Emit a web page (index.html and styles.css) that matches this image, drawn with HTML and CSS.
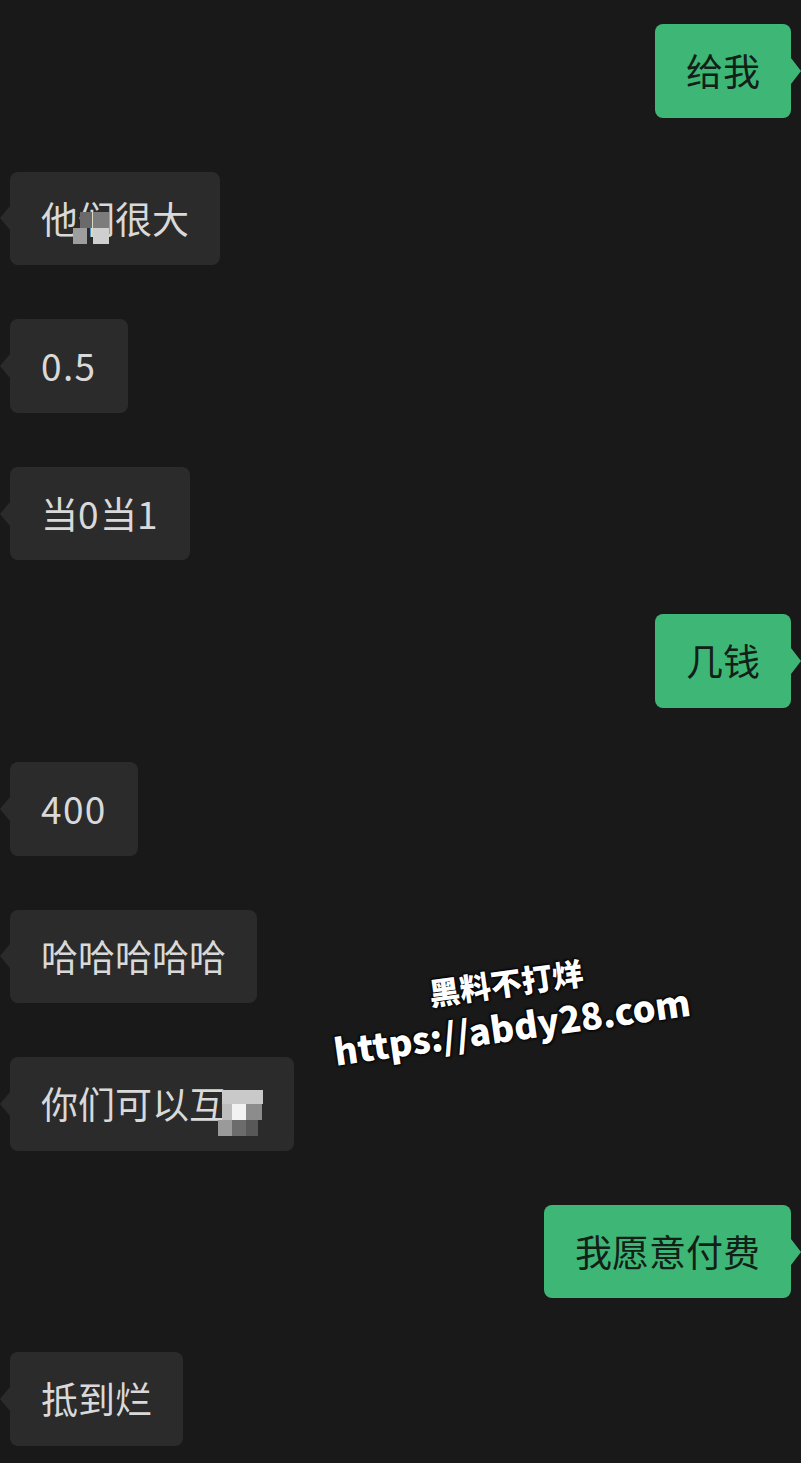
FILE: index.html
```html
<!DOCTYPE html>
<html lang="zh-CN">
<head>
<meta charset="utf-8">
<title>聊天记录</title>
<link rel="stylesheet" href="styles.css">
</head>
<body>
<div class="chat">
  <div class="row right"><div class="bubble me">给我</div></div>
  <div class="row left"><div class="bubble other">他<span class="hid">们<span class="mosaic m1"><i class="c1"></i><i class="c2"></i><i class="c3"></i><i class="c4"></i></span></span>很大</div></div>
  <div class="row left"><div class="bubble other"><span class="d">0.5</span></div></div>
  <div class="row left"><div class="bubble other">当<span class="d">0</span>当<span class="d">1</span></div></div>
  <div class="row right"><div class="bubble me">几钱</div></div>
  <div class="row left"><div class="bubble other"><span class="d">400</span></div></div>
  <div class="row left"><div class="bubble other">哈哈哈哈哈</div></div>
  <div class="row left"><div class="bubble other">你们可以互<span class="hid blank">换<span class="mosaic m2"><i class="d1"></i><i class="d2"></i><i class="d3"></i><i class="d4"></i><i class="d5"></i><i class="d6"></i><i class="d7"></i></span></span></div></div>
  <div class="row right"><div class="bubble me">我愿意付费</div></div>
  <div class="row left"><div class="bubble other">抵到烂</div></div>
</div>
<div class="watermark">
  <div class="wm1">黑料不打烊</div>
  <div class="wm2">https://abdy28.com</div>
</div>
</body>
</html>
```
FILE: styles.css
```css
html, body {
  margin: 0;
  padding: 0;
  background: #191919;
}
body {
  width: 801px;
  height: 1463px;
  overflow: hidden;
  position: relative;
  font-family: "Noto Sans CJK SC", "Noto Sans", sans-serif;
}
.chat {
  display: flex;
  flex-direction: column;
  gap: 54px;
  padding-top: 24px;
}
.row {
  display: flex;
}
.row.left {
  justify-content: flex-start;
  padding-left: 10px;
}
.row.right {
  justify-content: flex-end;
  padding-right: 10px;
}
.bubble {
  position: relative;
  font-size: 37px;
  line-height: 41.6px;
  padding: 26px 31px;
  border-radius: 8px;
  white-space: nowrap;
}
.bubble.other {
  background: #2b2b2b;
  color: #d9d9d9;
}
.bubble.me {
  background: #3eb776;
  color: #132017;
}
.d {
  letter-spacing: 1.4px;
}
.bubble.other::before {
  content: "";
  position: absolute;
  left: -10px;
  top: 50%;
  margin-top: -12px;
  border-right: 10px solid #2b2b2b;
  border-top: 12px solid transparent;
  border-bottom: 12px solid transparent;
}
.bubble.me::after {
  content: "";
  position: absolute;
  right: -10px;
  top: 50%;
  margin-top: -13px;
  border-left: 10px solid #3eb776;
  border-top: 13px solid transparent;
  border-bottom: 13px solid transparent;
}
.hid {
  position: relative;
}
.hid.blank {
  color: transparent;
}
.mosaic {
  position: absolute;
  left: 0;
  top: 0;
  width: 100%;
  height: 100%;
}
.mosaic i {
  position: absolute;
  display: block;
}
/* mosaic over 们 */
.m1 .c1 { left: -5px; top: 37px; width: 14px; height: 16px; background: #9e9e9e; }
.m1 .c2 { left: 2px; top: 21px; width: 12px; height: 16px; background: #6a6a6a; }
.m1 .c3 { left: 15px; top: 21px; width: 16px; height: 16px; background: #7c7c7c; }
.m1 .c4 { left: 15px; top: 37px; width: 16px; height: 16px; background: #cfcfcf; }
/* mosaic over last char of 你们可以互换 */
.m2 .d1 { left: -4px; top: 14px; width: 41px; height: 14px; background: #c9c9c9; }
.m2 .d2 { left: -4px; top: 28px; width: 10px; height: 16px; background: #bdbdbd; }
.m2 .d3 { left: 6px; top: 28px; width: 14px; height: 16px; background: #f2f2f2; }
.m2 .d4 { left: 20px; top: 28px; width: 16px; height: 16px; background: #8c8c8c; }
.m2 .d5 { left: -8px; top: 44px; width: 14px; height: 16px; background: #9a9a9a; }
.m2 .d6 { left: 6px; top: 44px; width: 14px; height: 16px; background: #6c6c6c; }
.m2 .d7 { left: 20px; top: 44px; width: 12px; height: 16px; background: #585858; }
.watermark {
  position: absolute;
  left: 304px;
  top: 962px;
  width: 410px;
  text-align: center;
  color: #ffffff;
  font-family: "Noto Sans CJK SC", "Noto Sans", sans-serif;
  font-weight: 900;
  transform: rotate(-8deg);
  text-shadow: 0 0 2px #000, 1px 1px 3px #000, -1px -1px 2px #000;
}
.wm1 {
  font-size: 31px;
  line-height: 40px;
}
.wm2 {
  font-size: 36px;
  line-height: 46px;
}
```
